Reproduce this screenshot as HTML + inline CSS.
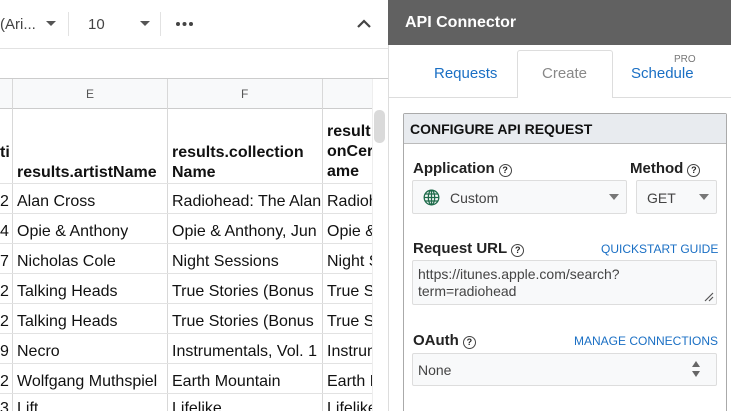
<!DOCTYPE html>
<html style="overflow:hidden;width:731px;height:411px"><head><meta charset="utf-8"><style>
*{margin:0;padding:0;box-sizing:border-box}
body{width:731px;height:411px;overflow:hidden;position:relative;background:#fff;font-family:"Liberation Sans",Arial,sans-serif}
.a{position:absolute}
.hl{position:absolute;height:1px;background:#e2e2e2}
.vl{position:absolute;width:1px;background:#e2e2e2}
.c{position:absolute;font-size:16px;color:#111;white-space:nowrap;overflow:hidden}
.q{display:inline-block;width:13px;height:13px;border:1.3px solid #444;border-radius:50%;font-size:9px;line-height:11px;text-align:center;font-weight:bold;vertical-align:0px;margin-left:4px}
.lbl{position:absolute;font-size:15px;font-weight:bold;color:#222}
.lnk{position:absolute;font-size:12px;color:#1a6fc4}
.box{position:absolute;border:1px solid #ddd;background:#f8f9fa;border-radius:2px}
</style></head><body>
<div class="a" style="left:0;top:0;width:388px;height:48px;background:#fff"></div>
<div class="a" style="left:0;top:16px;font-size:15px;color:#444">(Ari...</div>
<div class="a" style="left:46px;top:21px;border:5px solid transparent;border-top:5px solid #555"></div>
<div class="vl" style="left:68px;top:12px;height:24px"></div>
<div class="a" style="left:88px;top:16px;font-size:15px;color:#444">10</div>
<div class="a" style="left:140px;top:21px;border:5px solid transparent;border-top:5px solid #555"></div>
<div class="vl" style="left:160px;top:12px;height:24px"></div>
<svg class="a" style="left:175px;top:21px" width="20" height="6"><circle cx="3" cy="3" r="2" fill="#444"/><circle cx="9.5" cy="3" r="2" fill="#444"/><circle cx="16" cy="3" r="2" fill="#444"/></svg>
<svg class="a" style="left:356px;top:18px" width="16" height="12"><path d="M2 9 L8 3 L14 9" stroke="#444" stroke-width="2.2" fill="none"/></svg>
<div class="hl" style="left:0;top:48px;width:388px"></div>
<div class="hl" style="left:0;top:78px;width:388px;background:#ccc"></div>
<div class="a" style="left:0;top:79px;width:372px;height:29px;background:#f8f9fa"></div>
<div class="a" style="left:86px;top:87px;font-size:12px;color:#555">E</div>
<div class="a" style="left:241px;top:87px;font-size:12px;color:#555">F</div>
<div class="hl" style="left:0;top:108px;width:372px;background:#ccc"></div>
<div class="vl" style="left:12px;top:79px;height:332px;background:#d8d8d8"></div>
<div class="vl" style="left:167px;top:79px;height:332px;background:#d8d8d8"></div>
<div class="vl" style="left:322px;top:79px;height:332px;background:#d8d8d8"></div>
<div class="a" style="left:372px;top:79px;width:16px;height:332px;background:#fff;border-left:1px solid #eee"></div>
<div class="a" style="left:374px;top:110px;width:11px;height:33px;background:#dadada;border-radius:5px"></div>
<div class="c" style="left:0;top:144px;font-weight:bold;width:12px">ti</div>
<div class="c" style="left:17px;top:164px;font-weight:bold">results.artistName</div>
<div class="c" style="left:172px;top:143px;font-weight:bold;line-height:20px">results.collection<br>Name</div>
<div class="c" style="left:327px;top:122px;font-weight:bold;line-height:20px;width:45px">result<br>onCer<br>ame</div>
<div class="hl" style="left:0;top:183px;width:372px"></div>
<div class="hl" style="left:0;top:213px;width:372px"></div>
<div class="hl" style="left:0;top:243px;width:372px"></div>
<div class="hl" style="left:0;top:273px;width:372px"></div>
<div class="hl" style="left:0;top:303px;width:372px"></div>
<div class="hl" style="left:0;top:333px;width:372px"></div>
<div class="hl" style="left:0;top:363px;width:372px"></div>
<div class="hl" style="left:0;top:393px;width:372px"></div>
<div class="c" style="left:0;top:193px;width:12px">2</div><div class="c" style="left:17px;top:193px">Alan Cross</div><div class="c" style="left:172px;top:193px;width:150px">Radiohead: The Alan</div><div class="c" style="left:327px;top:193px;width:45px">Radiohead</div>
<div class="c" style="left:0;top:223px;width:12px">4</div><div class="c" style="left:17px;top:223px">Opie &amp; Anthony</div><div class="c" style="left:172px;top:223px;width:150px">Opie &amp; Anthony, Jun</div><div class="c" style="left:327px;top:223px;width:45px">Opie &amp;</div>
<div class="c" style="left:0;top:253px;width:12px">7</div><div class="c" style="left:17px;top:253px">Nicholas Cole</div><div class="c" style="left:172px;top:253px;width:150px">Night Sessions</div><div class="c" style="left:327px;top:253px;width:45px">Night S</div>
<div class="c" style="left:0;top:283px;width:12px">2</div><div class="c" style="left:17px;top:283px">Talking Heads</div><div class="c" style="left:172px;top:283px;width:150px">True Stories (Bonus</div><div class="c" style="left:327px;top:283px;width:45px">True St</div>
<div class="c" style="left:0;top:313px;width:12px">2</div><div class="c" style="left:17px;top:313px">Talking Heads</div><div class="c" style="left:172px;top:313px;width:150px">True Stories (Bonus</div><div class="c" style="left:327px;top:313px;width:45px">True St</div>
<div class="c" style="left:0;top:343px;width:12px">9</div><div class="c" style="left:17px;top:343px">Necro</div><div class="c" style="left:172px;top:343px;width:150px">Instrumentals, Vol. 1</div><div class="c" style="left:327px;top:343px;width:45px">Instrum</div>
<div class="c" style="left:0;top:373px;width:12px">2</div><div class="c" style="left:17px;top:373px">Wolfgang Muthspiel</div><div class="c" style="left:172px;top:373px;width:150px">Earth Mountain</div><div class="c" style="left:327px;top:373px;width:45px">Earth M</div>
<div class="c" style="left:0;top:400px;width:12px;height:11px">3</div><div class="c" style="left:17px;top:400px;height:11px">Lift</div><div class="c" style="left:172px;top:400px;width:150px;height:11px">Lifelike</div><div class="c" style="left:327px;top:400px;width:45px;height:11px">Lifelike</div>
<div class="a" style="left:388px;top:0;width:343px;height:411px;background:#fff;border-left:1px solid #ddd"></div>
<div class="a" style="left:388px;top:0;width:343px;height:45px;background:#616161"></div>
<div class="a" style="left:405px;top:14px;font-size:16px;font-weight:bold;color:#fff">API Connector</div>
<div class="hl" style="left:388px;top:97px;width:343px;background:#ddd"></div>
<div class="a" style="left:517px;top:50px;width:96px;height:48px;background:#fff;border:1px solid #ddd;border-bottom:none;border-radius:3px 3px 0 0"></div>
<div class="a" style="left:434px;top:65px;font-size:15px;color:#1a6fc4">Requests</div>
<div class="a" style="left:542px;top:65px;font-size:15px;color:#888">Create</div>
<div class="a" style="left:631px;top:65px;font-size:15px;color:#1a6fc4">Schedule</div>
<div class="a" style="left:674px;top:54px;font-size:10px;color:#777">PRO</div>
<div class="a" style="left:403px;top:113px;width:324px;height:298px;border:1px solid #aaa;border-bottom:none;border-radius:2px 2px 0 0"></div>
<div class="a" style="left:404px;top:114px;width:322px;height:30px;background:#e8ebef;border-bottom:1px solid #bbb"></div>
<div class="a" style="left:410px;top:121px;font-size:14px;font-weight:bold;color:#111">CONFIGURE API REQUEST</div>
<div class="lbl" style="left:413px;top:160px">Application<span class="q">?</span></div>
<div class="lbl" style="left:630px;top:160px">Method<span class="q">?</span></div>
<div class="box" style="left:412px;top:180px;width:215px;height:34px"></div>
<svg class="a" style="left:423px;top:189px" width="17" height="17" viewBox="0 0 17 17"><g stroke="#1e6b4a" stroke-width="1.3" fill="none"><circle cx="8.5" cy="8.5" r="7.3"/><ellipse cx="8.5" cy="8.5" rx="3.2" ry="7.3"/><path d="M8.5 1.2V15.8M1.2 8.5H15.8M2.3 5H14.7M2.3 12H14.7"/></g></svg>
<div class="a" style="left:450px;top:190px;font-size:14px;color:#444">Custom</div>
<div class="a" style="left:609px;top:194px;border:5px solid transparent;border-top:6px solid #777"></div>
<div class="box" style="left:636px;top:180px;width:81px;height:34px"></div>
<div class="a" style="left:647px;top:190px;font-size:14px;color:#444">GET</div>
<div class="a" style="left:699px;top:194px;border:5px solid transparent;border-top:6px solid #777"></div>
<div class="lbl" style="left:413px;top:240px">Request URL<span class="q">?</span></div>
<div class="lnk" style="left:601px;top:242px">QUICKSTART GUIDE</div>
<div class="box" style="left:412px;top:260px;width:305px;height:45px"></div>
<div class="a" style="left:418px;top:266px;font-size:14px;color:#444;line-height:17px">https://itunes.apple.com/search?<br>term=radiohead</div>
<svg class="a" style="left:704px;top:292px" width="10" height="10"><path d="M1 9L9 1M5 9L9 5" stroke="#555" stroke-width="1.2"/></svg>
<div class="lbl" style="left:413px;top:332px">OAuth<span class="q">?</span></div>
<div class="lnk" style="left:574px;top:334px">MANAGE CONNECTIONS</div>
<div class="box" style="left:412px;top:353px;width:305px;height:33px"></div>
<div class="a" style="left:418px;top:362px;font-size:14px;color:#444">None</div>
<div class="a" style="left:692px;top:361px;border:4px solid transparent;border-bottom:6px solid #666;border-top:none"></div>
<div class="a" style="left:692px;top:371px;border:4px solid transparent;border-top:6px solid #666;border-bottom:none"></div>
</body></html>
